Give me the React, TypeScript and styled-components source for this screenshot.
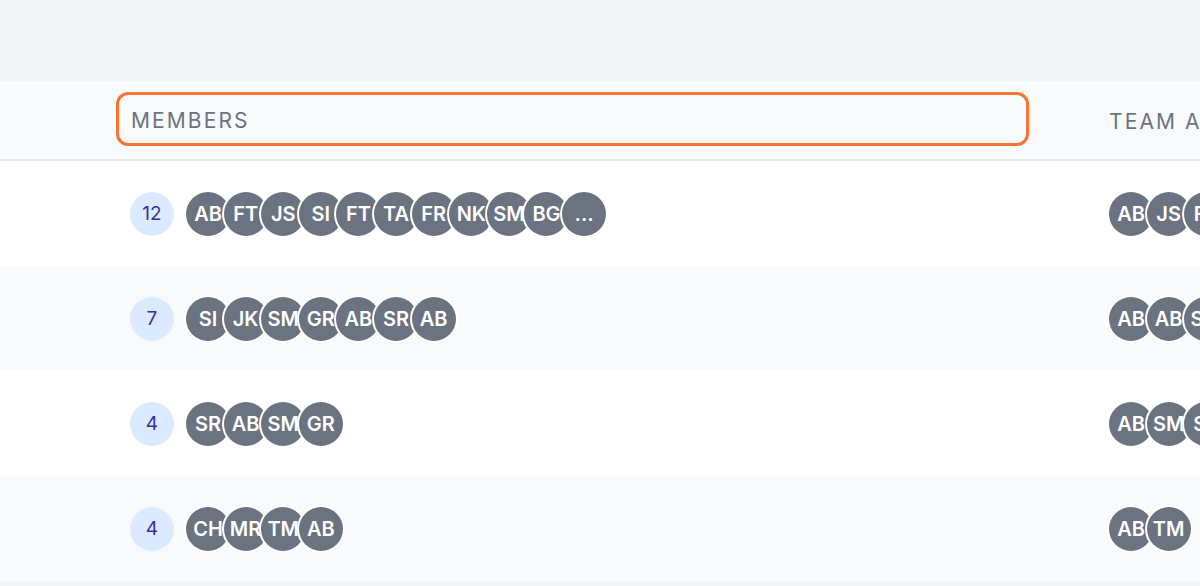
import React from "react";
import styled, { createGlobalStyle } from "styled-components";

const GlobalStyle = createGlobalStyle`
  html, body {
    margin: 0;
    padding: 0;
    background: #f3f4f6;
    font-family: Inter, "Noto Sans", "Liberation Sans", sans-serif;
  }
`;

const Page = styled.div`
  width: 1200px;
  height: 586px;
  overflow: hidden;
  background: #f3f4f6;
`;

const TopBar = styled.div`
  height: 81px;
`;

const Table = styled.div`
  width: 1485px;
  background: #ffffff;
`;

const Row = styled.div<{ $striped?: boolean }>`
  display: grid;
  grid-template-columns: 106px 979px 400px;
  height: 105px;
  background: ${(p) => (p.$striped ? "#f9fafb" : "#ffffff")};
`;

const HeadRow = styled.div`
  display: grid;
  grid-template-columns: 106px 979px 400px;
  height: 78px;
  background: #f9fafb;
  border-bottom: 2px solid #e5e7eb;
`;

const HeadCell = styled.div`
  display: flex;
  align-items: center;
  padding-left: 24px;
  padding-top: 2px;
  font-size: 21px;
  letter-spacing: 0.1em;
  text-transform: uppercase;
  white-space: nowrap;
  color: #6b7280;
`;

const FocusedHeadCell = styled.div`
  padding: 11px 56px 13px 10px;
  display: flex;
`;

const FocusRing = styled.div`
  flex: 1;
  display: flex;
  align-items: center;
  padding-left: 12px;
  padding-top: 2px;
  border: 3px solid #f97333;
  border-radius: 12px;
  font-size: 21px;
  letter-spacing: 0.1em;
  text-transform: uppercase;
  color: #6b7280;
`;

const Cell = styled.div`
  display: flex;
  align-items: center;
  padding-left: 24px;
`;

const CountBadge = styled.div`
  width: 44px;
  height: 44px;
  border-radius: 50%;
  background: #dbeafe;
  color: #3730a3;
  font-size: 19px;
  display: flex;
  align-items: center;
  justify-content: center;
  margin-right: 12px;
  flex-shrink: 0;
`;

const Stack = styled.div`
  display: flex;
  align-items: center;
`;

const Avatar = styled.div`
  width: 44px;
  height: 44px;
  border-radius: 50%;
  background: #6b7280;
  box-shadow: 0 0 0 2px #ffffff;
  color: #ffffff;
  font-size: 20px;
  font-weight: 600;
  display: flex;
  align-items: center;
  justify-content: center;
  white-space: nowrap;
  overflow: hidden;
  flex-shrink: 0;

  & + & {
    margin-left: -6.4px;
  }
`;

const rows = [
  {
    count: 12,
    members: ["AB", "FT", "JS", "SI", "FT", "TA", "FR", "NK", "SM", "BG"],
    more: true,
    admins: ["AB", "JS", "FR"],
  },
  {
    count: 7,
    members: ["SI", "JK", "SM", "GR", "AB", "SR", "AB"],
    more: false,
    admins: ["AB", "AB", "SM"],
  },
  {
    count: 4,
    members: ["SR", "AB", "SM", "GR"],
    more: false,
    admins: ["AB", "SM", "SR"],
  },
  {
    count: 4,
    members: ["CH", "MR", "TM", "AB"],
    more: false,
    admins: ["AB", "TM"],
  },
];

function App() {
  return (
    <Page>
      <GlobalStyle />
      <TopBar />
      <Table>
        <HeadRow>
          <div />
          <FocusedHeadCell>
            <FocusRing>Members</FocusRing>
          </FocusedHeadCell>
          <HeadCell>Team Admins</HeadCell>
        </HeadRow>
        {rows.map((row, i) => (
          <Row key={i} $striped={i % 2 === 1}>
            <div />
            <Cell>
              <CountBadge>{row.count}</CountBadge>
              <Stack>
                {row.members.map((m, j) => (
                  <Avatar key={j}>{m}</Avatar>
                ))}
                {row.more && <Avatar>...</Avatar>}
              </Stack>
            </Cell>
            <Cell>
              <Stack>
                {row.admins.map((a, j) => (
                  <Avatar key={j}>{a}</Avatar>
                ))}
              </Stack>
            </Cell>
          </Row>
        ))}
      </Table>
    </Page>
  );
}

export default App;
